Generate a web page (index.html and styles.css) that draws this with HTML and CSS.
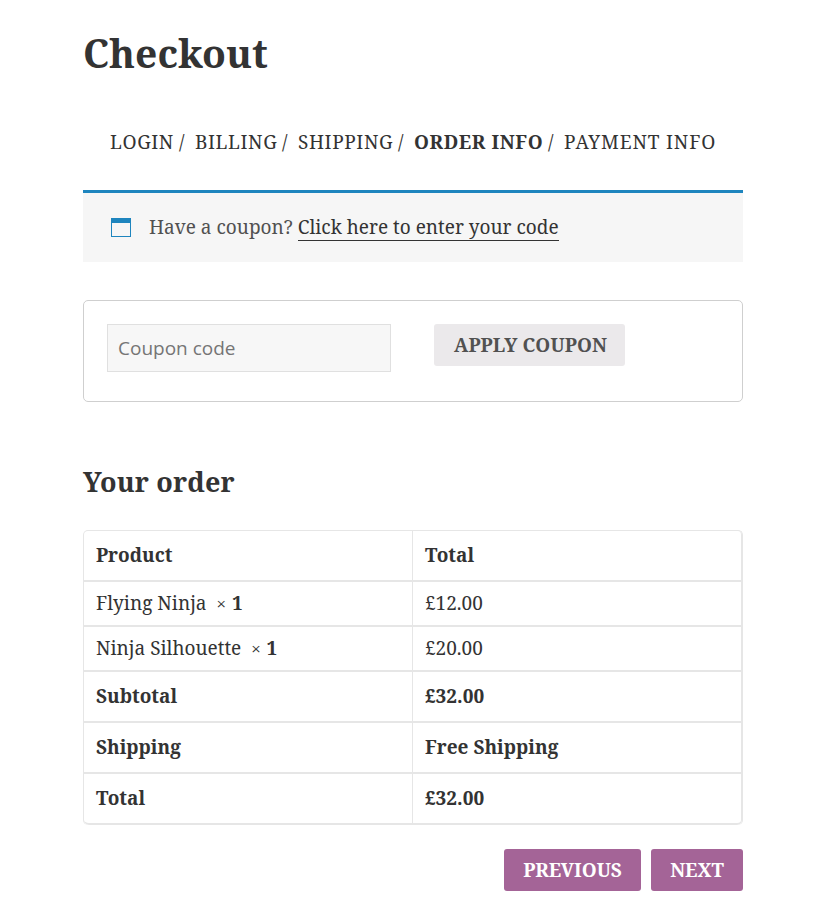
FILE: index.html
```html
<!DOCTYPE html>
<html lang="en">
<head>
<meta charset="utf-8">
<title>Checkout</title>
<link rel="stylesheet" href="styles.css">
</head>
<body>
<main class="checkout">
  <h1>Checkout</h1>
  <nav class="steps">
    <span class="step login">LOGIN</span><span class="slash">/</span>
    <span class="step billing">BILLING</span><span class="slash">/</span>
    <span class="step shipping">SHIPPING</span><span class="slash">/</span>
    <span class="step current">ORDER INFO</span><span class="slash">/</span>
    <span class="step payment">PAYMENT INFO</span>
  </nav>
  <div class="notice">
    <svg class="notice-icon" width="20" height="20" viewBox="0 0 20 20"><path fill="#1e85be" fill-rule="evenodd" d="M0 0h20v19H0zM1 5v13h18V5z"/></svg>
    <span>Have a coupon? <a href="#">Click here to enter your code</a></span>
  </div>
  <form class="coupon">
    <input type="text" placeholder="Coupon code">
    <button class="btn apply" type="button">APPLY COUPON</button>
  </form>
  <h2>Your order</h2>
  <table class="order">
    <thead>
      <tr><th>Product</th><th>Total</th></tr>
    </thead>
    <tbody>
      <tr><td>Flying Ninja&nbsp; <strong><span class="times">×</span> 1</strong></td><td>£12.00</td></tr>
      <tr><td>Ninja Silhouette&nbsp; <strong><span class="times">×</span> 1</strong></td><td>£20.00</td></tr>
    </tbody>
    <tfoot>
      <tr><th>Subtotal</th><th>£32.00</th></tr>
      <tr><th>Shipping</th><th>Free Shipping</th></tr>
      <tr><th>Total</th><th>£32.00</th></tr>
    </tfoot>
  </table>
  <div class="actions">
    <button class="btn previous" type="button">PREVIOUS</button>
    <button class="btn next" type="button">NEXT</button>
  </div>
</main>
</body>
</html>
```
FILE: styles.css
```css
* { box-sizing: border-box; }
body { margin: 0; background: #fff; color: #333; font: 19px/28px "Noto Serif", "DejaVu Serif", serif; }
.checkout { width: 660px; margin-left: 83px; padding-top: 29px; }
h1 { margin: 0; font-size: 39px; line-height: 48px; }

.steps { display: flex; margin-top: 51px; padding-left: 27px; white-space: nowrap; }
.step { letter-spacing: 0.6px; }
.login { width: 69px; }
.billing { width: 87px; }
.shipping { width: 100px; }
.current { width: 134px; font-weight: 700; }
.payment { letter-spacing: 0.85px; }
.slash { width: 16px; }

.notice { display: flex; align-items: center; gap: 18px; height: 72px; margin-top: 34px; padding: 0 28px 2px; border-top: 3px solid #1e85be; background: #f6f6f6; color: #515151; }
.notice-icon { position: relative; top: 1px; }
.notice a { color: #333; text-decoration: none; border-bottom: 1px solid #333; }

.coupon { display: flex; align-items: flex-start; gap: 43px; height: 102px; margin: 38px 0 0; padding: 23px; border: 1px solid #cfcfcf; border-radius: 5px; }
.coupon input { width: 284px; height: 48px; padding: 0 10px; border: 1px solid #e0e0e0; border-radius: 0; background: #f7f7f7; font: 19px "Open Sans", "Noto Sans", sans-serif; }
.coupon input::placeholder { color: #757575; opacity: 1; }

.btn { height: 42px; padding: 0; border: 0; border-radius: 3px; font: 700 19px/42px "Noto Serif", "DejaVu Serif", serif; text-align: center; }
.apply { width: 191px; padding-left: 2px; background: #ebe9eb; color: #515151; letter-spacing: 0.1px; }

h2 { margin: 65px 0 33px; font-size: 27px; line-height: 30px; letter-spacing: 0.15px; }

.order { width: 100%; table-layout: fixed; border-collapse: separate; border-spacing: 0; border: 1px solid #e6e6e6; border-width: 1px 1px 0 1px; border-radius: 5px; }
.order th, .order td { height: 45px; padding: 0 12px 2px; border-right: 1px solid #e6e6e6; border-bottom: 2px solid #e6e6e6; text-align: left; }
.order th { height: 51px; }
.order thead th:last-child { border-top-right-radius: 4px; }
.order tfoot tr:last-child th:first-child { border-bottom-left-radius: 5px; }
.order tfoot tr:last-child th:last-child { border-bottom-right-radius: 5px; }
.times { font-weight: 400; font-size: 17px; line-height: 1; letter-spacing: 1px; }

.actions { display: flex; justify-content: flex-end; gap: 10px; margin-top: 24px; }
.actions .btn { background: #a46497; color: #fff; }
.previous { width: 137px; }
.next { width: 92px; }
```
